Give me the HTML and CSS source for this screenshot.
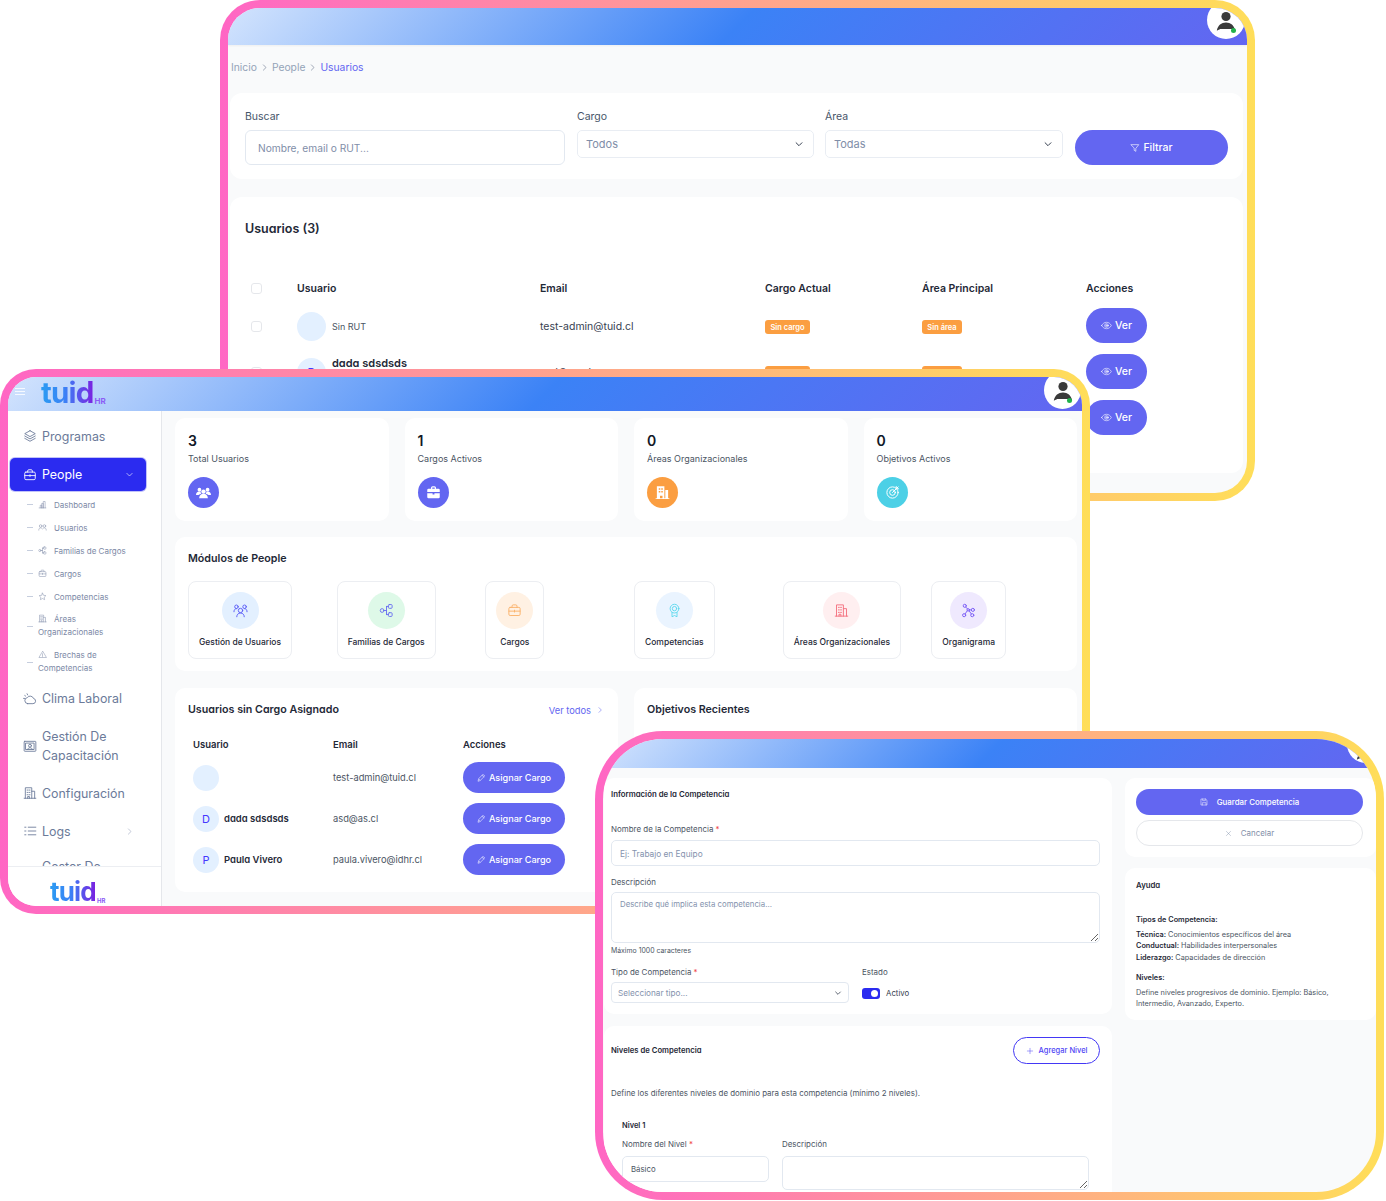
FILE: index.html
```html
<!DOCTYPE html>
<html lang="es">
<head>
<meta charset="utf-8">
<title>tuid HR</title>
<link rel="stylesheet" href="styles.css">
</head>
<body>
<svg class="sprite" xmlns="http://www.w3.org/2000/svg">
  <symbol id="i-layers" viewBox="0 0 24 24"><path d="M12 3 3 8l9 5 9-5-9-5z"/><path d="m3 12 9 5 9-5"/><path d="m3 16 9 5 9-5"/></symbol>
  <symbol id="i-case" viewBox="0 0 24 24"><rect x="3" y="7" width="18" height="13" rx="2"/><path d="M8 7V5a2 2 0 0 1 2-2h4a2 2 0 0 1 2 2v2"/><path d="M3 13h18M12 11.500v3"/></symbol>
  <symbol id="i-chart" viewBox="0 0 24 24"><path d="M3 21h18M6 21v-7h4v7M10 21V9h4v12M14 21V4h5v17"/></symbol>
  <symbol id="i-users" viewBox="0 0 24 24"><circle cx="7" cy="8" r="3.500"/><circle cx="17" cy="8" r="3.500"/><path d="M2 19c0-4 2-6 5-6 2 0 3 1 4 2M22 19c0-4-2-6-5-6-2 0-3 1-4 2"/></symbol>
  <symbol id="i-usersb" viewBox="0 0 24 24"><circle cx="12" cy="12" r="3.500"/><circle cx="5.500" cy="6" r="2.800"/><circle cx="18.500" cy="6" r="2.800"/><path d="M6 22c0-3 2-6 6-6s6 3 6 6M1.500 14c0-3 1.500-5 4-5M22.500 14c0-3-1.500-5-4-5"/></symbol>
  <symbol id="i-nodes" viewBox="0 0 24 24"><circle cx="5" cy="12" r="3"/><rect x="15" y="2.500" width="6" height="6" rx="1.500"/><rect x="15" y="15.500" width="6" height="6" rx="1.500"/><path d="M8 12h4M12 5.500v13M12 5.500h3M12 18.500h3"/></symbol>
  <symbol id="i-star" viewBox="0 0 24 24"><path d="m12 3 2.800 5.800 6.200.9-4.500 4.400 1.100 6.300L12 17.400l-5.600 3 1.100-6.300L3 9.700l6.200-.9z"/></symbol>
  <symbol id="i-building" viewBox="0 0 24 24"><path d="M2 21h20M4 21V3h11v18M15 9h5v12M7 7h1.500M10.500 7H12M7 11h1.500M10.500 11H12M7 15h1.500M10.500 15H12M8 21v-3h3v3"/></symbol>
  <symbol id="i-warn" viewBox="0 0 24 24"><path d="M12 4 2.500 20h19zM12 10v5M12 17.500v.5"/></symbol>
  <symbol id="i-cloud" viewBox="0 0 24 24"><path d="M8 20h9a4.500 4.500 0 0 0 1-8.900A6 6 0 0 0 7.500 9.500 5.300 5.300 0 0 0 8 20z"/><path d="M3 11H1M7 3l1 2M3 6l1.500 1"/></symbol>
  <symbol id="i-board" viewBox="0 0 24 24"><rect x="2" y="4" width="20" height="17" rx="1"/><rect x="5" y="7" width="14" height="11"/><circle cx="12" cy="11.500" r="2.500"/><path d="M8 18c0-2 2-3 4-3s4 1 4 3"/></symbol>
  <symbol id="i-list" viewBox="0 0 24 24"><path d="M9 5.500h13M9 12h13M9 18.500h13M3 5.500h2M3 12h2M3 18.500h2"/></symbol>
  <symbol id="i-down" viewBox="0 0 24 24"><path d="m5 9 7 7 7-7"/></symbol>
  <symbol id="i-right" viewBox="0 0 24 24"><path d="m9 5 7 7-7 7"/></symbol>
  <symbol id="i-eye" viewBox="0 0 24 24"><path d="M1.500 12C4 7.500 7.500 5 12 5s8 2.500 10.500 7c-2.500 4.500-6 7-10.500 7S4 16.500 1.500 12z"/><circle cx="12" cy="12" r="4"/><circle cx="12" cy="12" r="1.500"/></symbol>
  <symbol id="i-filter" viewBox="0 0 24 24"><path d="M3 4h18l-7 9v7l-4-2.500V13z"/></symbol>
  <symbol id="i-pencil" viewBox="0 0 24 24"><path d="m3 21 1.500-6L16 3.500l4.500 4.500L9 19.500z"/><path d="m13.500 6 4.500 4.500M6 17l1.500 1.500"/></symbol>
  <symbol id="i-save" viewBox="0 0 24 24"><path d="M4 3h13l4 4v14H4z"/><path d="M8 3v5h8V3M7 21v-7h11v7"/></symbol>
  <symbol id="i-x" viewBox="0 0 24 24"><path d="m5 5 14 14M19 5 5 19"/></symbol>
  <symbol id="i-plus" viewBox="0 0 24 24"><path d="M12 4v16M4 12h16"/></symbol>
  <symbol id="i-medal" viewBox="0 0 24 24"><circle cx="12" cy="9" r="7"/><circle cx="12" cy="9" r="3.500"/><path d="M8 15v7l4-2 4 2v-7"/></symbol>
  <symbol id="i-org" viewBox="0 0 24 24"><circle cx="6" cy="4.500" r="2.500"/><circle cx="19" cy="11" r="2.500"/><circle cx="5" cy="19.500" r="2.500"/><circle cx="18" cy="19.500" r="2.500"/><circle cx="11.500" cy="11" r="2"/><path d="m7.500 6.500 3 3M13.500 11h3M10 12.500l-3.500 5M13 12.500l3.500 5"/></symbol>
  <symbol id="f-users" viewBox="0 0 24 24"><circle cx="12" cy="10.500" r="3.500"/><path d="M5 21c0-4 3-7 7-7s7 3 7 7z"/><circle cx="5.500" cy="7.500" r="3"/><circle cx="18.500" cy="7.500" r="3"/><path d="M0 16c0-3 2-5.500 5.500-5.500.7 0 1.200.1 1.800.3A5.500 5.500 0 0 0 8.500 14 8 8 0 0 0 4 16zM24 16c0-3-2-5.500-5.500-5.500-.7 0-1.200.1-1.800.3a5.500 5.500 0 0 1-1.200 3.200A8 8 0 0 1 20 16z"/></symbol>
  <symbol id="f-case" viewBox="0 0 24 24"><path d="M8 6V4.500A2.500 2.500 0 0 1 10.500 2h3A2.500 2.500 0 0 1 16 4.500V6h4a2 2 0 0 1 2 2v3H2V8a2 2 0 0 1 2-2zm2 0h4V4.500a.5.5 0 0 0-.5-.5h-3a.5.5 0 0 0-.5.5zM2 13h8.500v2h3v-2H22v6a2 2 0 0 1-2 2H4a2 2 0 0 1-2-2z"/></symbol>
  <symbol id="f-building" viewBox="0 0 24 24"><path fill-rule="evenodd" d="M3 2h12v19h-3v-4H8v4H3zm3 3v2.500h2.500V5zm4 0v2.500h2.500V5zM6 9.500V12h2.500V9.500zm4 0V12h2.500V9.500zM6 14v-.5zM16.500 8H21v13h-4.500zM1 21h22v1.500H1z"/></symbol>
  <symbol id="i-target" viewBox="0 0 24 24"><circle cx="12" cy="12" r="9"/><circle cx="12" cy="12" r="4.500"/><path d="M12 12 21 3M18 2.500V6h3.500"/></symbol>
  <symbol id="f-person" viewBox="0 0 24 24"><circle cx="12" cy="6" r="5"/><path d="M12 12.500c-5 0-9 3-10 9 2-1.500 3.500-2 5-2h10c1.500 0 3 .5 5 2-1-6-5-9-10-9z"/></symbol>
</svg>

<section class="win win-one">
  <div class="win-inner">
    <header class="hdr hdr-one">
      <div class="avatar-blob"><svg class="person"><use href="#f-person"/></svg><span class="online"></span></div>
    </header>
    <div class="w1-body">
      <nav class="crumbs">
        <span class="crumb">Inicio</span><svg class="ic crumb-sep"><use href="#i-right"/></svg>
        <span class="crumb">People</span><svg class="ic crumb-sep"><use href="#i-right"/></svg>
        <span class="crumb crumb-on">Usuarios</span>
      </nav>
      <div class="card filters">
        <div class="f-search"><div class="f-label">Buscar</div><input class="f-input" placeholder="Nombre, email o RUT..."></div>
        <div class="f-cargo"><div class="f-label">Cargo</div><div class="f-select"><span>Todos</span><svg class="ic chev"><use href="#i-down"/></svg></div></div>
        <div class="f-area"><div class="f-label">Área</div><div class="f-select"><span>Todas</span><svg class="ic chev"><use href="#i-down"/></svg></div></div>
        <button class="btn btn-filter"><svg class="ic"><use href="#i-filter"/></svg>Filtrar</button>
      </div>
      <div class="card users-card">
        <h2 class="users-title">Usuarios (3)</h2>
        <div class="utable">
          <span class="check"></span><b class="th">Usuario</b><b class="th">Email</b><b class="th">Cargo Actual</b><b class="th">Área Principal</b><b class="th">Acciones</b>

          <span class="check"></span>
          <div class="ucell"><span class="ava"></span><span class="rut">Sin RUT</span></div>
          <span class="td">test-admin@tuid.cl</span>
          <div class="bcell"><span class="badge badge-c">Sin cargo</span></div>
          <div class="bcell"><span class="badge badge-a">Sin área</span></div>
          <button class="btn btn-ver"><svg class="ic"><use href="#i-eye"/></svg>Ver</button>

          <span class="check"></span>
          <div class="ucell"><span class="ava">D</span><div><div class="uname">dada sdsdsds</div><div class="rut rut-sub">Sin RUT</div></div></div>
          <span class="td">asd@as.cl</span>
          <div class="bcell"><span class="badge badge-c">Sin cargo</span></div>
          <div class="bcell"><span class="badge badge-a">Sin área</span></div>
          <button class="btn btn-ver"><svg class="ic"><use href="#i-eye"/></svg>Ver</button>

          <span class="check"></span>
          <div class="ucell"><span class="ava">P</span><div><div class="uname">Paula Vivero</div><div class="rut rut-sub">Sin RUT</div></div></div>
          <span class="td">paula.vivero@idhr.cl</span>
          <div class="bcell"><span class="badge badge-c">Sin cargo</span></div>
          <div class="bcell"><span class="badge badge-a">Sin área</span></div>
          <button class="btn btn-ver"><svg class="ic"><use href="#i-eye"/></svg>Ver</button>
        </div>
      </div>
    </div>
  </div>
</section>

<section class="win win-two">
  <div class="win-inner">
    <header class="hdr hdr-two">
      <div class="burger"><i></i><i></i><i></i></div>
      <div class="logo"><span class="logo-word">tuid</span><span class="logo-hr">HR</span></div>
      <div class="avatar-blob"><svg class="person"><use href="#f-person"/></svg><span class="online"></span></div>
    </header>
    <div class="w2-body">
      <aside class="side">
        <div class="side-nav">
          <div class="nav-item"><svg class="ic nav-ic"><use href="#i-layers"/></svg>Programas</div>
          <div class="nav-item nav-active"><svg class="ic nav-ic"><use href="#i-case"/></svg>People<svg class="ic nav-chev"><use href="#i-down"/></svg></div>
          <div class="subs">
            <div class="sub"><i class="dash"></i><svg class="ic sub-ic"><use href="#i-chart"/></svg>Dashboard</div>
            <div class="sub"><i class="dash"></i><svg class="ic sub-ic"><use href="#i-users"/></svg>Usuarios</div>
            <div class="sub"><i class="dash"></i><svg class="ic sub-ic"><use href="#i-nodes"/></svg>Familias de Cargos</div>
            <div class="sub"><i class="dash"></i><svg class="ic sub-ic"><use href="#i-case"/></svg>Cargos</div>
            <div class="sub"><i class="dash"></i><svg class="ic sub-ic"><use href="#i-star"/></svg>Competencias</div>
            <div class="sub sub-two"><i class="dash"></i><div class="sub-text"><svg class="ic sub-ic"><use href="#i-building"/></svg>Áreas Organizacionales</div></div>
            <div class="sub sub-two"><i class="dash"></i><div class="sub-text"><svg class="ic sub-ic"><use href="#i-warn"/></svg>Brechas de Competencias</div></div>
          </div>
          <div class="nav-item nav-clima"><svg class="ic nav-ic"><use href="#i-cloud"/></svg>Clima Laboral</div>
          <div class="nav-item nav-gest"><svg class="ic nav-ic"><use href="#i-board"/></svg><span>Gestión De<br>Capacitación</span></div>
          <div class="nav-item"><svg class="ic nav-ic"><use href="#i-building"/></svg>Configuración</div>
          <div class="nav-item nav-logs"><svg class="ic nav-ic"><use href="#i-list"/></svg>Logs<svg class="ic nav-chev"><use href="#i-right"/></svg></div>
          <div class="nav-item nav-cut">Gestor De</div>
        </div>
        <div class="side-foot"><span class="logo-word logo-foot">tuid</span><span class="logo-hr logo-hr-foot">HR</span></div>
      </aside>
      <main class="w2-main">
        <div class="stats">
          <div class="card stat"><div class="stat-n">3</div><div class="stat-l">Total Usuarios</div><span class="stat-ic s-indigo"><svg class="fi"><use href="#f-users"/></svg></span></div>
          <div class="card stat"><div class="stat-n">1</div><div class="stat-l">Cargos Activos</div><span class="stat-ic s-indigo"><svg class="fi"><use href="#f-case"/></svg></span></div>
          <div class="card stat"><div class="stat-n">0</div><div class="stat-l">Áreas Organizacionales</div><span class="stat-ic s-orange"><svg class="fi"><use href="#f-building"/></svg></span></div>
          <div class="card stat"><div class="stat-n">0</div><div class="stat-l">Objetivos Activos</div><span class="stat-ic s-teal"><svg class="ic target"><use href="#i-target"/></svg></span></div>
        </div>
        <div class="card modules">
          <h3 class="m-title">Módulos de People</h3>
          <div class="m-grid">
            <div class="tile"><span class="tile-c c-blue"><svg class="ic"><use href="#i-usersb"/></svg></span><span class="tile-l">Gestión de Usuarios</span></div>
            <div class="tile"><span class="tile-c c-green"><svg class="ic"><use href="#i-nodes"/></svg></span><span class="tile-l">Familias de Cargos</span></div>
            <div class="tile"><span class="tile-c c-orange"><svg class="ic"><use href="#i-case"/></svg></span><span class="tile-l">Cargos</span></div>
            <div class="tile"><span class="tile-c c-sky"><svg class="ic"><use href="#i-medal"/></svg></span><span class="tile-l">Competencias</span></div>
            <div class="tile"><span class="tile-c c-red"><svg class="ic"><use href="#i-building"/></svg></span><span class="tile-l">Áreas Organizacionales</span></div>
            <div class="tile"><span class="tile-c c-violet"><svg class="ic"><use href="#i-org"/></svg></span><span class="tile-l">Organigrama</span></div>
          </div>
        </div>
        <div class="bottoms">
          <div class="card bcard">
            <div class="b-head"><h3 class="m-title">Usuarios sin Cargo Asignado</h3><a class="see-all">Ver todos<svg class="ic"><use href="#i-right"/></svg></a></div>
            <div class="atable">
              <b class="ath">Usuario</b><b class="ath">Email</b><b class="ath">Acciones</b>
              <div class="acell"><span class="ava ava-s"></span></div><span class="atd">test-admin@tuid.cl</span><button class="btn btn-assign"><svg class="ic"><use href="#i-pencil"/></svg>Asignar Cargo</button>
              <div class="acell"><span class="ava ava-s">D</span><span class="aname">dada sdsdsds</span></div><span class="atd">asd@as.cl</span><button class="btn btn-assign"><svg class="ic"><use href="#i-pencil"/></svg>Asignar Cargo</button>
              <div class="acell"><span class="ava ava-s">P</span><span class="aname">Paula Vivero</span></div><span class="atd">paula.vivero@idhr.cl</span><button class="btn btn-assign"><svg class="ic"><use href="#i-pencil"/></svg>Asignar Cargo</button>
            </div>
          </div>
          <div class="card bcard">
            <div class="b-head"><h3 class="m-title">Objetivos Recientes</h3></div>
          </div>
        </div>
      </main>
    </div>
  </div>
</section>

<section class="win win-three">
  <div class="win-inner">
    <header class="hdr hdr-three">
      <div class="avatar-blob"><svg class="person"><use href="#f-person"/></svg></div>
    </header>
    <div class="w3-body">
      <div class="w3-left">
        <div class="card c-info">
          <h4 class="t3 t3-info">Información de la Competencia</h4>
          <div class="l3 l3-first">Nombre de la Competencia <em>*</em></div>
          <input class="i3 i3-name" placeholder="Ej: Trabajo en Equipo">
          <div class="l3 l3-desc">Descripción</div>
          <textarea class="i3 ta-desc" placeholder="Describe qué implica esta competencia..."></textarea>
          <div class="hint">Máximo 1000 caracteres</div>
          <div class="row-tipo">
            <div class="tipo"><div class="l3 l3-sm">Tipo de Competencia <em>*</em></div><div class="sel3"><span>Seleccionar tipo...</span><svg class="ic chev3"><use href="#i-down"/></svg></div></div>
            <div class="estado"><div class="l3 l3-sm">Estado</div><div class="toggle-row"><span class="toggle"><i></i></span><span class="toggle-t">Activo</span></div></div>
          </div>
        </div>
        <div class="card c-levels">
          <div class="lv-head"><h4 class="t3">Niveles de Competencia</h4><button class="btn-add"><svg class="ic"><use href="#i-plus"/></svg>Agregar Nivel</button></div>
          <p class="lv-desc">Define los diferentes niveles de dominio para esta competencia (mínimo 2 niveles).</p>
          <div class="level">
            <div class="lv-name">Nivel 1</div>
            <div class="lv-grid">
              <div><div class="l3 l3-lv">Nombre del Nivel <em>*</em></div><input class="i3 i3-lv" value="Básico"></div>
              <div><div class="l3 l3-lv">Descripción</div><textarea class="i3 ta-lv"></textarea></div>
            </div>
          </div>
        </div>
      </div>
      <div class="w3-right">
        <div class="card c-actions">
          <button class="btn btn-save"><svg class="ic"><use href="#i-save"/></svg>Guardar Competencia</button>
          <button class="btn-cancel"><svg class="ic"><use href="#i-x"/></svg>Cancelar</button>
        </div>
        <div class="card c-help">
          <h4 class="t3">Ayuda</h4>
          <div class="h-sub h-sub1">Tipos de Competencia:</div>
          <div class="h-lines"><b>Técnica:</b> Conocimientos específicos del área<br><b>Conductual:</b> Habilidades interpersonales<br><b>Liderazgo:</b> Capacidades de dirección</div>
          <div class="h-sub h-sub2">Niveles:</div>
          <div class="h-def">Define niveles progresivos de dominio. Ejemplo: Básico, Intermedio, Avanzado, Experto.</div>
        </div>
      </div>
    </div>
  </div>
</section>
</body>
</html>
```
FILE: styles.css
```css
* { box-sizing: border-box; }
html, body { margin: 0; padding: 0; }
body {
  position: relative;
  width: 1386px;
  height: 1201px;
  overflow: hidden;
  background: #fff;
  font-family: "Inter", "Noto Sans", sans-serif;
  color: #111827;
}
.sprite { display: none; }
h2, h3, h4, p { margin: 0; }
b { font-weight: 600; }
button { font-family: inherit; border: 0; padding: 0; cursor: pointer; }

.ic { fill: none; stroke: currentColor; stroke-width: 1.6; stroke-linecap: round; stroke-linejoin: round; flex: none; }

/* windows on the free canvas */
.win {
  position: absolute;
  padding: 8px;
  background: linear-gradient(90deg, #ff66c4, #ffde59);
}
.win-inner {
  height: 100%;
  display: flex;
  flex-direction: column;
  overflow: hidden;
  background: #f9fafb;
}
.win-one { left: 220px; top: 0; width: 1035px; height: 501px; border-radius: 40px; z-index: 1; }
.win-one .win-inner { border-radius: 32px; }
.win-two { left: 0; top: 369px; width: 1090px; height: 545px; border-radius: 36px; z-index: 2; }
.win-two .win-inner { border-radius: 28px; }
.win-three { left: 595px; top: 731px; width: 789px; height: 469px; border-radius: 68px; z-index: 3; }
.win-three .win-inner { border-radius: 60px; }

.hdr {
  flex: none;
  display: flex;
  justify-content: flex-end;
  background: linear-gradient(135deg, #d3e4fd 0%, #3b82f6 50%, #6366f1 100%);
}
.hdr-one { height: 37px; box-shadow: 0 1px 2px rgba(0,0,0,.05); }
.hdr-two { height: 34px; align-items: flex-start; }
.hdr-three { height: 29px; }

.avatar-blob {
  position: relative;
  flex: none;
  width: 38px;
  height: 38px;
  margin: -7px 2px 0 0;
  border-radius: 50%;
  background: #fff;
  display: flex;
  align-items: center;
  justify-content: center;
  padding-top: 4px;
}
.hdr-two .avatar-blob { margin-top: -6px; margin-right: 1px; width: 37px; }
.hdr-three .avatar-blob { margin: -14px -9px 0 0; padding-top: 14px; }
.person { width: 22px; height: 22px; fill: #3a3a3a; }
.online {
  position: absolute;
  right: 9px;
  bottom: 6px;
  width: 5px;
  height: 5px;
  border-radius: 50%;
  background: #22b14c;
}

/* window one */
.w1-body { padding: 0 4px 0 2px; }
.crumbs {
  height: 48px;
  padding: 0 0 4px 1px;
  display: flex;
  align-items: center;
  gap: 3px;
  font-size: 10.300px;
}
.crumb { color: #94a3b8; }
.crumb-on { color: #6366f1; }
.crumb-sep { width: 9px; height: 9px; color: #64748b; }

.card { background: #fff; border-radius: 12px; }

.filters {
  height: 86px;
  padding: 16px 15px 0;
  display: flex;
  align-items: flex-start;
  font-size: 10.500px;
}
.f-search { width: 320px; }
.f-cargo { width: 237px; margin-left: 12px; }
.f-area { width: 238px; margin-left: 11px; }
.f-label { height: 15px; line-height: 15px; margin-bottom: 6px; color: #475569; }
.f-input {
  display: block;
  width: 100%;
  height: 35px;
  padding: 0 12px;
  border: 1px solid #e2e8f0;
  border-radius: 6px;
  background: #fff;
  font: 10.200px "Inter", sans-serif;
  color: #475569;
}
.f-input::placeholder { color: #7f8ea8; opacity: 1; }
.f-select {
  height: 28px;
  padding: 0 9px 0 8px;
  border: 1px solid #e9edf3;
  border-radius: 5px;
  display: flex;
  align-items: center;
  justify-content: space-between;
  font-size: 11px;
  color: #7f8ea8;
}
.chev { width: 10px; height: 10px; color: #374151; stroke-width: 2.400; }
.btn {
  display: inline-flex;
  align-items: center;
  justify-content: center;
  background: #6366f1;
  color: #fff;
  border-radius: 999px;
}
.btn-filter { width: 153px; height: 35px; margin: 21px 0 0 12px; font-size: 10.500px; font-weight: 500; gap: 3px; }
.btn-filter .ic { width: 10px; height: 10px; stroke-width: 1.500; }

.users-card { margin-top: 18px; height: 276px; padding-top: 24px; }
.users-title {
  height: 16px;
  line-height: 16px;
  margin-left: 15px;
  font-size: 12.500px;
  font-weight: 600;
  font-feature-settings: "cv11";
  color: #1f2937;
}
.utable {
  margin-top: 36px;
  padding-left: 21px;
  display: grid;
  grid-template-columns: 46px 243px 225px 157px 164px 61px;
  grid-template-rows: 30px repeat(3, 46px);
  align-items: center;
  font-size: 10.500px;
}
.check {
  display: block;
  width: 11px;
  height: 11px;
  border: 1px solid #e5e7eb;
  border-radius: 3px;
  background: #fff;
}
.th { font-size: 10.500px; font-weight: 600; color: #1f2937; }
.ucell { display: flex; align-items: center; gap: 6px; }
.ava {
  flex: none;
  width: 29px;
  height: 29px;
  border-radius: 50%;
  background: #e3f0ff;
  color: #4338ff;
  font-size: 11px;
  display: flex;
  align-items: center;
  justify-content: center;
}
.rut { font-size: 9px; color: #4b5563; }
.rut-sub { margin-top: 5px; line-height: 13px; }
.uname { font-size: 11px; font-weight: 600; font-feature-settings: "cv11"; color: #1f2937; line-height: 13px; }
.td { color: #374151; }
.bcell { padding-top: 2px; }
.badge {
  display: flex;
  align-items: center;
  justify-content: center;
  height: 14px;
  border-radius: 3px;
  background: #fb9e41;
  color: #fff;
  font-size: 7.500px;
  font-weight: 600;
}
.badge-c { width: 45px; }
.badge-a { width: 40px; }
.btn-ver { width: 61px; height: 35px; margin-top: -1px; font-size: 10.500px; font-weight: 500; gap: 3px; }
.btn-ver .ic { width: 11px; height: 11px; stroke-width: 1.300; }

/* window two */
.burger { width: 10px; margin: 11px 0 0 7px; display: flex; flex-direction: column; gap: 2px; }
.burger i { display: block; height: 1px; background: rgba(255,255,255,.8); }
.logo { margin: 0 auto 0 16px; display: flex; align-items: flex-end; height: 30px; }
.logo-word {
  display: block;
  font-size: 29.500px;
  font-weight: 700;
  line-height: 30px;
  letter-spacing: -.8px;
  font-family: "Inter", sans-serif;
  background: linear-gradient(90deg, #2b9cf2 0%, #3b82f6 45%, #7c1fe0 100%);
  -webkit-background-clip: text;
  background-clip: text;
  color: transparent;
}
.logo-hr { font-size: 8px; font-weight: 700; color: #8b5cf6; margin: 0 0 1px 1px; line-height: 9px; }
.w2-body { flex: 1; min-height: 0; display: flex; }
.side {
  flex: none;
  width: 154px;
  background: #fff;
  border-right: 1px solid #e5e7eb;
  display: flex;
  flex-direction: column;
}
.side-nav { height: 455px; flex: none; overflow: hidden; padding-top: 6px; }
.nav-item {
  height: 38px;
  padding-left: 15px;
  display: flex;
  align-items: center;
  gap: 6px;
  font-size: 12.400px;
  color: #6b7a99;
}
.nav-ic { width: 14px; height: 14px; stroke-width: 1.500; margin-left: -.5px; margin-right: -.5px; }
.nav-active {
  height: 33px;
  width: 136px;
  margin: 3px 0 0 2px;
  padding-left: 13px;
  border-radius: 5px;
  background: #2b2bf0;
  color: #fff;
  box-shadow: 0 0 0 1px rgba(99,102,241,.4);
}
.nav-chev { width: 9px; height: 9px; margin-left: auto; margin-right: 12px; }
.nav-logs .nav-chev { margin-right: 27px; color: #9aa5bd; }
.nav-clima { height: 37px; }
.nav-cut { height: 30px; align-items: flex-start; padding: 9px 0 0 34px; }
.subs { margin-top: 2px; }
.sub {
  height: 23px;
  padding-left: 19px;
  display: flex;
  align-items: center;
  font-size: 8px;
  color: #7c89a6;
}
.dash { flex: none; width: 6px; height: 1px; background: #c6cede; margin-right: 5px; }
.sub-ic { width: 9px; height: 9px; margin-right: 7px; stroke-width: 1.300; }
.sub-two { height: 36px; }
.sub-text { line-height: 13px; width: 100px; }
.sub-text .sub-ic { display: inline-block; vertical-align: -1px; margin-right: 7px; }
.nav-gest { height: 57px; line-height: 19px; }
.side-foot {
  flex: 1;
  border-top: 1px solid #eceef2;
  padding: 11px 0 0 42px;
  display: flex;
  align-items: flex-end;
}
.logo-foot { font-size: 26px; line-height: 28px; }
.logo-hr-foot { font-size: 6px; margin-bottom: 1px; }

.w2-main { flex: 1; min-width: 0; padding: 7px 5px 0 13px; }
.stats { display: grid; grid-template-columns: repeat(4, 1fr); gap: 16px; }
.stat { height: 103px; padding: 14px 13px 0; border-radius: 10px; }
.stat-n { height: 18px; line-height: 18px; font-size: 14px; font-weight: 600; color: #111827; }
.stat-l { height: 16px; line-height: 16px; margin-top: 1px; font-size: 9px; color: #4b5563; }
.stat-ic { display: flex; width: 31px; height: 31px; margin-top: 10px; border-radius: 50%; align-items: center; justify-content: center; }
.s-indigo { background: #6366f1; }
.s-orange { background: #fb9e41; }
.s-teal { background: #4cd0e6; }
.fi { width: 15px; height: 15px; fill: #fff; }
.target { width: 15px; height: 15px; color: #fff; }

.modules { margin-top: 16px; height: 134px; padding: 13px; border-radius: 10px; }
.m-title { height: 18px; line-height: 18px; font-size: 10.700px; font-weight: 600; font-feature-settings: "cv11"; color: #1f2937; }
.m-grid { margin-top: 13px; display: grid; grid-template-columns: repeat(6, 1fr); column-gap: 16px; justify-items: start; }
.tile {
  height: 78px;
  padding: 10px 10px 0;
  border: 1px solid #eceef2;
  border-radius: 8px;
  display: flex;
  flex-direction: column;
  align-items: center;
  background: #fff;
}
.tile-c { display: flex; width: 37px; height: 37px; border-radius: 50%; align-items: center; justify-content: center; }
.tile-c .ic { width: 15px; height: 15px; stroke-width: 1.500; }
.tile-l { margin-top: 7px; line-height: 12px; font-size: 8.500px; font-weight: 500; color: #1f2937; white-space: nowrap; }
.c-blue { background: #e3f0ff; color: #5a5cf6; }
.c-green { background: #def9e8; color: #6b70f0; }
.c-orange { background: #fff1e3; color: #fbb26b; }
.c-sky { background: #eaf4ff; color: #5ed9ee; }
.c-red { background: #ffeff0; color: #f47280; }
.c-violet { background: #efe9fe; color: #7a5cf5; }

.bottoms { margin-top: 17px; display: grid; grid-template-columns: 1fr 1fr; gap: 16px; }
.bcard { height: 204px; padding: 13px; border-radius: 10px; }
.b-head { display: flex; align-items: center; justify-content: space-between; padding-right: 1px; }
.see-all { display: flex; align-items: center; gap: 5px; font-size: 9.300px; color: #6366f1; }
.see-all .ic { width: 8px; height: 8px; color: #6366f1; }
.atable {
  margin: 13px 0 0 5px;
  display: grid;
  grid-template-columns: 140px 130px 102px;
  grid-template-rows: 25px repeat(3, 41px);
  align-items: center;
}
.ath { font-size: 9.500px; font-weight: 600; color: #1f2937; }
.acell { display: flex; align-items: center; gap: 5px; }
.ava-s { width: 26px; height: 26px; font-size: 11px; }
.aname { font-size: 9.500px; font-weight: 600; font-feature-settings: "cv11"; color: #1f2937; }
.atd { font-size: 9.300px; color: #4b5563; }
.btn-assign { width: 102px; height: 31px; font-size: 9.100px; font-weight: 500; gap: 3px; }
.btn-assign .ic { width: 9px; height: 9px; stroke-width: 1.500; }

/* window three */
.w3-body { flex: 1; min-height: 0; overflow: hidden; padding: 10px 0 0 1px; display: flex; gap: 13px; align-items: flex-start; }
.w3-left { width: 508px; flex: none; }
.w3-right { width: 251px; flex: none; }
.c-info { height: 236px; padding: 10px 12px 0 7px; border-radius: 10px; }
.t3 { height: 12px; line-height: 12px; font-size: 7.800px; font-weight: 600; font-feature-settings: "cv11"; color: #1f2937; }
.t3-info { height: 13px; line-height: 13px; }
.l3 { height: 12px; line-height: 12px; font-size: 7.950px; color: #4b5563; }
.l3 em { font-style: normal; color: #ef4444; }
.l3-first { margin-top: 22px; }
.l3-desc { margin-top: 10px; }
.i3 {
  display: block;
  width: 100%;
  border: 1px solid #e2e8f0;
  border-radius: 5px;
  background: #fff;
  font: 7.800px "Inter", sans-serif;
  color: #4b5563;
  padding: 0 8px;
}
.i3::placeholder { color: #8492ad; opacity: 1; }
.i3-name { height: 26px; margin-top: 5px; padding-top: 1px; font-size: 8.300px; }
.ta-desc { height: 51px; margin-top: 4px; padding-top: 6px; }
.hint { height: 10px; line-height: 10px; margin-top: 3px; margin-bottom: -1px; font-size: 6.900px; color: #4b5563; }
.row-tipo { margin-top: 11px; display: flex; gap: 13px; }
.tipo { width: 238px; }
.sel3 {
  height: 21px;
  margin-top: 4px;
  padding: 0 6px;
  border: 1px solid #e2e8f0;
  border-radius: 4px;
  display: flex;
  align-items: center;
  justify-content: space-between;
  font-size: 8.200px;
  color: #8492ad;
}
.chev3 { width: 8px; height: 8px; color: #374151; stroke-width: 2.400; }
.toggle-row { display: flex; align-items: center; gap: 6px; margin-top: 10px; height: 11px; }
.toggle { display: flex; align-items: center; justify-content: flex-end; width: 18px; height: 11px; padding-right: 2px; border-radius: 3px; background: #2b2bf0; }
.toggle i { display: block; width: 7px; height: 7px; border-radius: 50%; background: #fff; }
.toggle-t { font-size: 7.800px; color: #374151; line-height: 10px; margin-top: -1px; }

.c-levels { margin-top: 12px; height: 180px; padding: 11px 12px 0 7px; border-radius: 10px; }
.lv-head { display: flex; align-items: center; justify-content: space-between; height: 27px; }
.lv-head .t3 { font-size: 7.700px; }
.btn-add {
  display: flex;
  align-items: center;
  justify-content: center;
  gap: 5px;
  width: 87px;
  height: 27px;
  border: 1.500px solid #4338f5;
  border-radius: 999px;
  background: #fff;
  font-size: 7.500px;
  font-weight: 500;
  color: #4f46f5;
}
.btn-add .ic { width: 8px; height: 8px; stroke-width: 1.500; color: #4f46f5; }
.lv-desc { margin-top: 23px; height: 12px; line-height: 12px; font-size: 7.900px; color: #4b5563; }
.level { padding: 21px 0 0 11px; }
.lv-name { height: 12px; line-height: 12px; font-size: 7.500px; font-weight: 600; color: #1f2937; }
.lv-grid { margin-top: 6px; display: grid; grid-template-columns: 147px 307px; column-gap: 13px; }
.l3-lv { margin-bottom: 6px; }
.i3-lv { height: 26px; }
.ta-lv { height: 34px; }

.c-actions { height: 79px; padding: 11px 13px 0 11px; border-radius: 10px; display: flex; flex-direction: column; gap: 5px; }
.btn-save { height: 26px; gap: 9px; font-size: 7.900px; font-weight: 500; }
.btn-save .ic { width: 8px; height: 8px; stroke-width: 1.500; }
.btn-cancel {
  display: flex;
  align-items: center;
  justify-content: center;
  gap: 9px;
  height: 26px;
  border: 1px solid #e5e7eb;
  border-radius: 999px;
  background: #fff;
  font-size: 7.900px;
  color: #7f8ea8;
}
.btn-cancel .ic { width: 7px; height: 7px; stroke-width: 1.500; }
.c-help { margin-top: 11px; height: 152px; padding: 11px 13px 0 11px; border-radius: 10px; }
.h-sub { height: 12px; line-height: 12px; font-size: 7.300px; font-weight: 600; color: #1f2937; }
.h-sub1 { margin-top: 23px; }
.h-sub2 { margin-top: 9px; }
.h-lines { margin-top: 3px; line-height: 11.300px; font-size: 7.300px; color: #4b5563; }
.h-lines b { color: #1f2937; }
.h-def { margin-top: 4.500px; line-height: 10.800px; font-size: 7.300px; color: #4b5563; }
```
